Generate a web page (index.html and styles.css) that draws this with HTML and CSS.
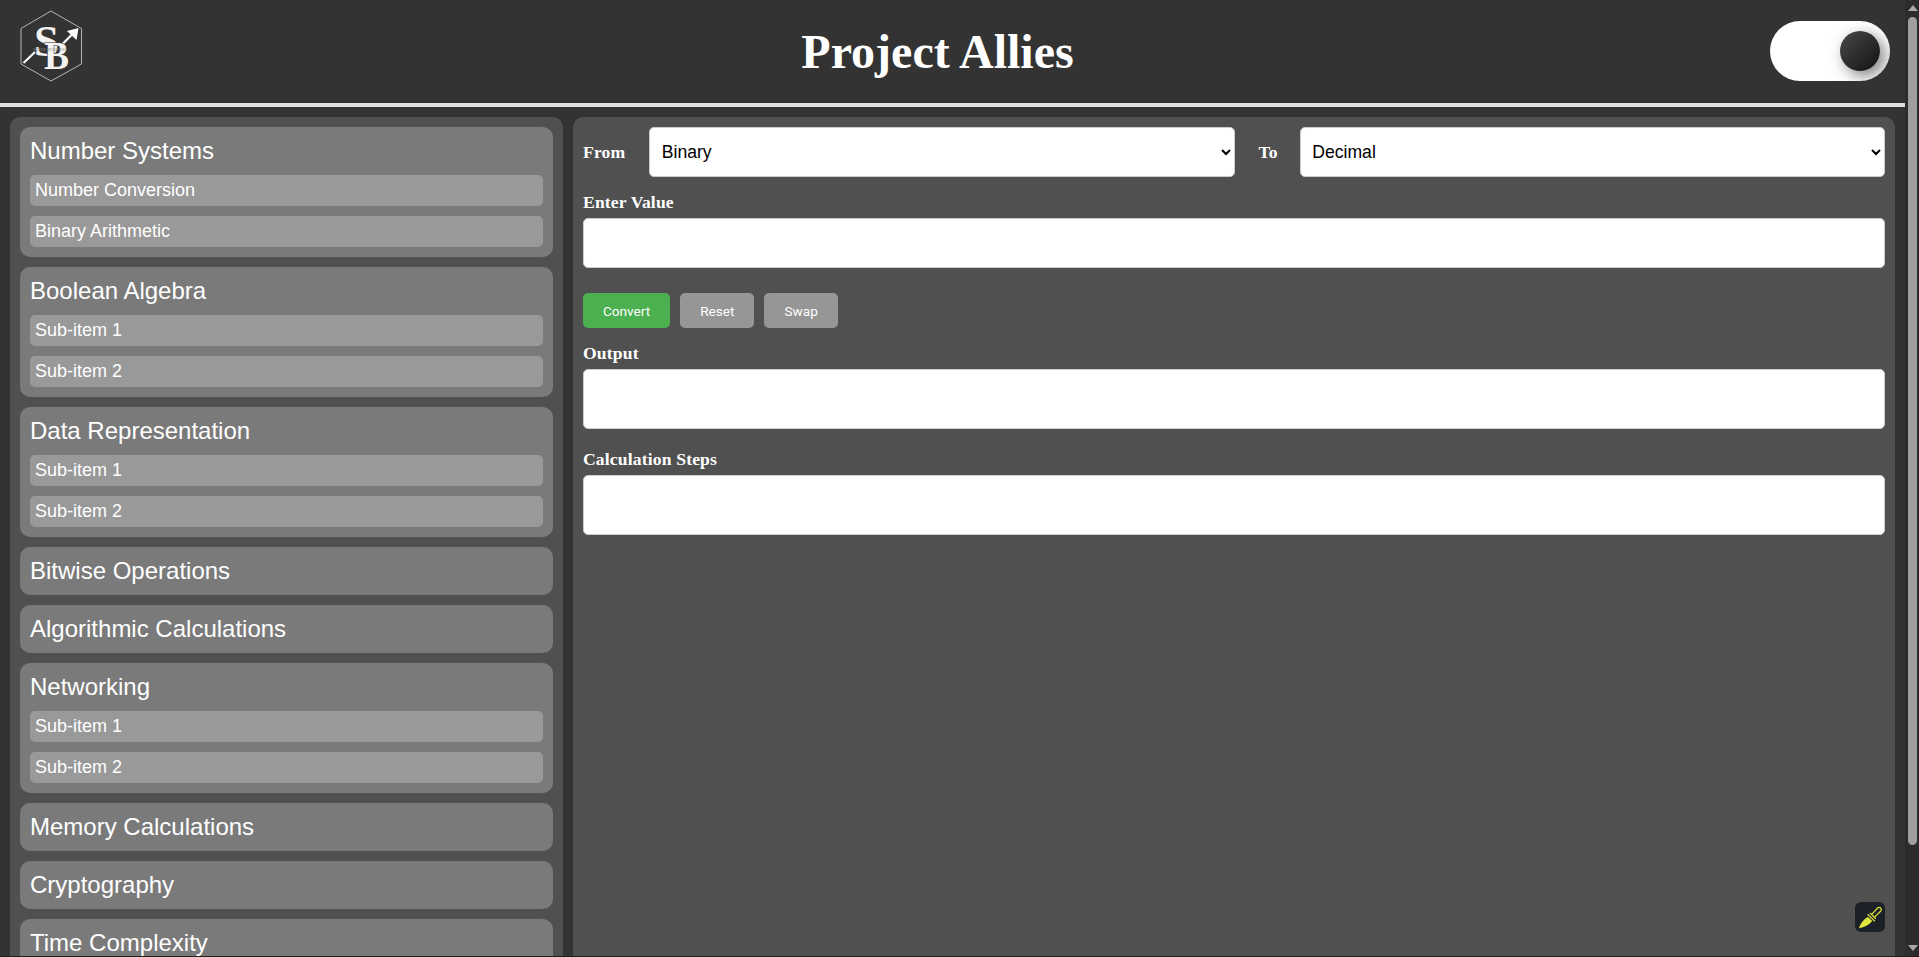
FILE: index.html
```html
<!DOCTYPE html>
<html lang="en">
<head>
<meta charset="utf-8">
<title>Project Allies</title>
<link rel="stylesheet" href="styles.css">
</head>
<body>
<header class="topbar">
  <div class="logo">
    <svg class="logo-svg" viewBox="20 0 85 103" width="85" height="103" aria-label="Logo">
      <polygon class="logo-hex" points="51,11 81.5,28.5 81.5,64 51,81 21,64 21,28.5"/>
      <path class="logo-arrow" d="M63 43.5 L73 33.5"/>
      <polygon class="logo-head" points="78.5,28 76.5,40 67,31"/>
      <path class="logo-arrow" d="M23.5 63 L35 52"/>
      <text class="logo-s" x="34" y="56" textLength="25" lengthAdjust="spacingAndGlyphs">S</text>
      <text class="logo-b" x="44" y="69" textLength="25" lengthAdjust="spacingAndGlyphs">B</text>
      <text class="logo-small" x="33" y="50.5" textLength="34" lengthAdjust="spacingAndGlyphs">SUPER BUSINESS</text>
    </svg>
  </div>
  <h1 class="title">Project Allies</h1>
  <div class="toggle"><span class="knob"></span></div>
</header>

<div class="layout">
  <nav class="sidebar">
    <section class="group">
      <h2 class="group-title">Number Systems</h2>
      <div class="sub">Number Conversion</div>
      <div class="sub">Binary Arithmetic</div>
    </section>
    <section class="group">
      <h2 class="group-title">Boolean Algebra</h2>
      <div class="sub">Sub-item 1</div>
      <div class="sub">Sub-item 2</div>
    </section>
    <section class="group">
      <h2 class="group-title">Data Representation</h2>
      <div class="sub">Sub-item 1</div>
      <div class="sub">Sub-item 2</div>
    </section>
    <section class="group"><h2 class="group-title">Bitwise Operations</h2></section>
    <section class="group"><h2 class="group-title">Algorithmic Calculations</h2></section>
    <section class="group">
      <h2 class="group-title">Networking</h2>
      <div class="sub">Sub-item 1</div>
      <div class="sub">Sub-item 2</div>
    </section>
    <section class="group"><h2 class="group-title">Memory Calculations</h2></section>
    <section class="group"><h2 class="group-title">Cryptography</h2></section>
    <section class="group"><h2 class="group-title">Time Complexity</h2></section>
  </nav>

  <main class="panel">
    <div class="convert-row">
      <label class="lbl lbl-from" for="from">From</label>
      <select class="field select" id="from">
        <option>Binary</option><option>Octal</option><option>Decimal</option><option>Hexadecimal</option>
      </select>
      <label class="lbl lbl-to" for="to">To</label>
      <select class="field select" id="to">
        <option>Decimal</option><option>Binary</option><option>Octal</option><option>Hexadecimal</option>
      </select>
    </div>
    <label class="lbl lbl-block" for="val">Enter Value</label>
    <input class="field input" id="val" type="text">
    <div class="actions">
      <button class="btn btn-go" type="button">Convert</button>
      <button class="btn" type="button">Reset</button>
      <button class="btn" type="button">Swap</button>
    </div>
    <div class="lbl lbl-block lbl-output">Output</div>
    <div class="field box"></div>
    <div class="lbl lbl-block lbl-steps">Calculation Steps</div>
    <div class="field box"></div>
  </main>
</div>

<button class="pen" type="button" aria-label="Highlighter">
  <svg viewBox="0 0 30 30" width="30" height="30">
    <path class="pen-fill" d="M4 26.2 C5.5 21 9 17 13 15 L17.2 19 C14 23 9.5 25.5 4 26.2Z"/>
    <path class="pen-line" d="M12.6 12.2 L19.8 19.2 M15 11 L20.8 16.8"/>
    <path class="pen-line" d="M16.5 12.6 L22.6 6 a2.2 2.2 0 0 1 3.2 3 L19 15.6"/>
  </svg>
</button>

<div class="scrollbar" aria-hidden="true">
  <span class="sb-arrow sb-up"></span>
  <span class="sb-thumb"></span>
  <span class="sb-arrow sb-down"></span>
</div>
<div class="window-edge"></div>
</body>
</html>
```
FILE: styles.css
```css
* { box-sizing: border-box; }
html { background: #333; scrollbar-width: none; }
body { margin: 0; padding-right: 14px; background: #333; color: #fff; font-family: "Liberation Serif", serif; }

.scrollbar {
  position: fixed;
  top: 0;
  right: 0;
  bottom: 0;
  display: flex;
  flex-direction: column;
  align-items: center;
  width: 14px;
  padding-left: 1px;
  background: #2c2c2c;
}
.sb-arrow {
  position: absolute;
  left: 3px;
  width: 0;
  height: 0;
  border-left: 5px solid transparent;
  border-right: 5px solid transparent;
}
.sb-up { top: 5px; border-bottom: 6px solid #a8a8a8; }
.sb-down { bottom: 6px; border-top: 6px solid #a8a8a8; }
.sb-thumb {
  width: 9px;
  height: 828px;
  margin-top: 17px;
  border-radius: 5px;
  background: #9e9e9e;
}

.topbar {
  display: flex;
  align-items: center;
  justify-content: space-between;
  height: 107px;
  padding: 0 15px 1px 20px;
  border-bottom: 4px solid #e0e0e0;
  background: #333;
}
.logo { align-self: flex-start; width: 85px; height: 102px; }
.logo-svg { display: block; }
.logo-hex { fill: none; stroke: #c4c4c4; stroke-width: 0.9; }
.logo-arrow { stroke: #fff; stroke-width: 2.2; fill: none; }
.logo-head { fill: #fff; }
.logo-s { font: bold 44px "Liberation Serif", serif; fill: #f2f2f2; }
.logo-b { font: bold 39px "Liberation Serif", serif; fill: #f2f2f2; stroke: #333; stroke-width: 1.2; paint-order: stroke; }
.logo-small { font: 4.2px "Liberation Serif", serif; fill: #8c8c8c; }

.title { margin: 0; font: bold 48px "Liberation Serif", serif; color: #fff; }

.toggle {
  position: relative;
  width: 120px;
  height: 60px;
  border-radius: 30px;
  background: #fff;
  overflow: hidden;
}
.knob {
  position: absolute;
  top: 10px;
  right: 10px;
  width: 40px;
  height: 40px;
  border-radius: 50%;
  background: linear-gradient(135deg, #4a4a4a, #111);
  box-shadow: 5px 5px 15px rgba(0, 0, 0, 0.5);
}

.layout {
  display: grid;
  grid-template-columns: 553px 1fr;
  gap: 10px;
  padding: 10px;
}
.sidebar {
  display: flex;
  flex-direction: column;
  gap: 10px;
  padding: 10px 10px 80px;
  border-radius: 10px;
  background: #505050;
  font-family: "Liberation Sans", Arial, sans-serif;
}
.group {
  padding: 10px;
  border-radius: 10px;
  background: #7a7a7a;
}
.group-title {
  margin: 0;
  font-size: 24px;
  font-weight: 400;
  line-height: 28px;
  color: #fff;
}
.sub {
  margin-top: 10px;
  padding: 5px;
  border-radius: 5px;
  background: #999;
  font-size: 18px;
  line-height: 21px;
}

.panel {
  padding: 10px;
  border-radius: 10px;
  background: #505050;
}
.convert-row { display: flex; align-items: center; }
.lbl { font-size: 17.6px; font-weight: 700; line-height: 20px; letter-spacing: 0.15px; color: #fff; }
.lbl-from { margin-right: 24px; }
.lbl-to { margin: 0 22px 0 24px; }
.lbl-block { display: block; margin: 15px 0 6px; }
.lbl-steps { margin-top: 20px; }

.field {
  display: block;
  height: 50px;
  border: 1px solid #ccc;
  border-radius: 5px;
  background: #fff;
  color: #000;
  font-family: "Liberation Sans", Arial, sans-serif;
  font-size: 17.6px;
}
.select { flex: 1 1 0; min-width: 0; padding: 10px 10px 10px 7.5px; }
.input { width: 100%; padding: 10px; }
.box { height: 60px; width: 100%; }

.actions { display: flex; gap: 10px; margin-top: 25px; }
.btn {
  height: 35px;
  padding: 0 20px;
  border: 0;
  border-radius: 5px;
  background: #969696;
  color: #fff;
  font: 13.6px Roboto, sans-serif;
}
.btn-go { background: #4caf50; }

.pen {
  position: fixed;
  right: 34px;
  bottom: 25px;
  width: 30px;
  height: 30px;
  padding: 0;
  border: 0;
  border-radius: 6px;
  background: #1b2127;
}
.pen svg { display: block; }
.pen-fill { fill: #e2e63c; }
.pen-line { fill: none; stroke: #d8dc3a; stroke-width: 1.3; }

.window-edge {
  position: fixed;
  left: 0;
  right: 0;
  bottom: 0;
  height: 1px;
  background: #1f1f1f;
}
```
